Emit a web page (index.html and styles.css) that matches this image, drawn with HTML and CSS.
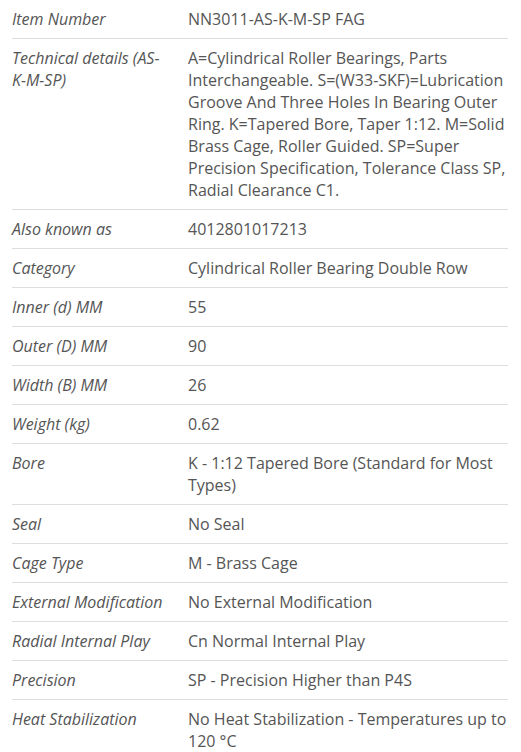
FILE: index.html
```html
<!DOCTYPE html>
<html lang="en">
<head>
<meta charset="utf-8">
<title>NN3011-AS-K-M-SP FAG</title>
<link rel="stylesheet" href="styles.css">
</head>
<body>
<div class="specs">
  <div class="row"><div class="label">Item Number</div><div class="value">NN3011-AS-K-M-SP FAG</div></div>
  <div class="row"><div class="label">Technical details (AS-K-M-SP)</div><div class="value">A=Cylindrical Roller Bearings, Parts Interchangeable. S=(W33-SKF)=Lubrication Groove And Three Holes In Bearing Outer Ring. K=Tapered Bore, Taper 1:12. M=Solid Brass Cage, Roller Guided. SP=Super Precision Specification, Tolerance Class SP, Radial Clearance C1.</div></div>
  <div class="row"><div class="label">Also known as</div><div class="value">4012801017213</div></div>
  <div class="row"><div class="label">Category</div><div class="value">Cylindrical Roller Bearing Double Row</div></div>
  <div class="row"><div class="label">Inner (d) MM</div><div class="value">55</div></div>
  <div class="row"><div class="label">Outer (D) MM</div><div class="value">90</div></div>
  <div class="row"><div class="label">Width (B) MM</div><div class="value">26</div></div>
  <div class="row"><div class="label">Weight (kg)</div><div class="value">0.62</div></div>
  <div class="row"><div class="label">Bore</div><div class="value">K - 1:12 Tapered Bore (Standard for Most Types)</div></div>
  <div class="row"><div class="label">Seal</div><div class="value">No Seal</div></div>
  <div class="row"><div class="label">Cage Type</div><div class="value">M - Brass Cage</div></div>
  <div class="row"><div class="label">External Modification</div><div class="value">No External Modification</div></div>
  <div class="row"><div class="label">Radial Internal Play</div><div class="value">Cn Normal Internal Play</div></div>
  <div class="row"><div class="label">Precision</div><div class="value">SP - Precision Higher than P4S</div></div>
  <div class="row"><div class="label">Heat Stabilization</div><div class="value">No Heat Stabilization - Temperatures up to 120 °C</div></div>
</div>
</body>
</html>
```
FILE: styles.css
```css
html, body {
  margin: 0;
  padding: 0;
  background: #ffffff;
}
body {
  font-family: "Open Sans", "Liberation Sans", sans-serif;
  font-size: 16px;
  line-height: 22px;
  color: #555555;
}
.specs {
  width: 496px;
  margin-left: 12px;
}
.row {
  display: grid;
  grid-template-columns: 176px 320px;
  border-top: 1px solid #dddddd;
}
.row:first-child {
  border-top: none;
}
.label {
  font-style: italic;
  padding: 8px 20px 8px 0;
}
.value {
  padding: 8px 0;
}
```
